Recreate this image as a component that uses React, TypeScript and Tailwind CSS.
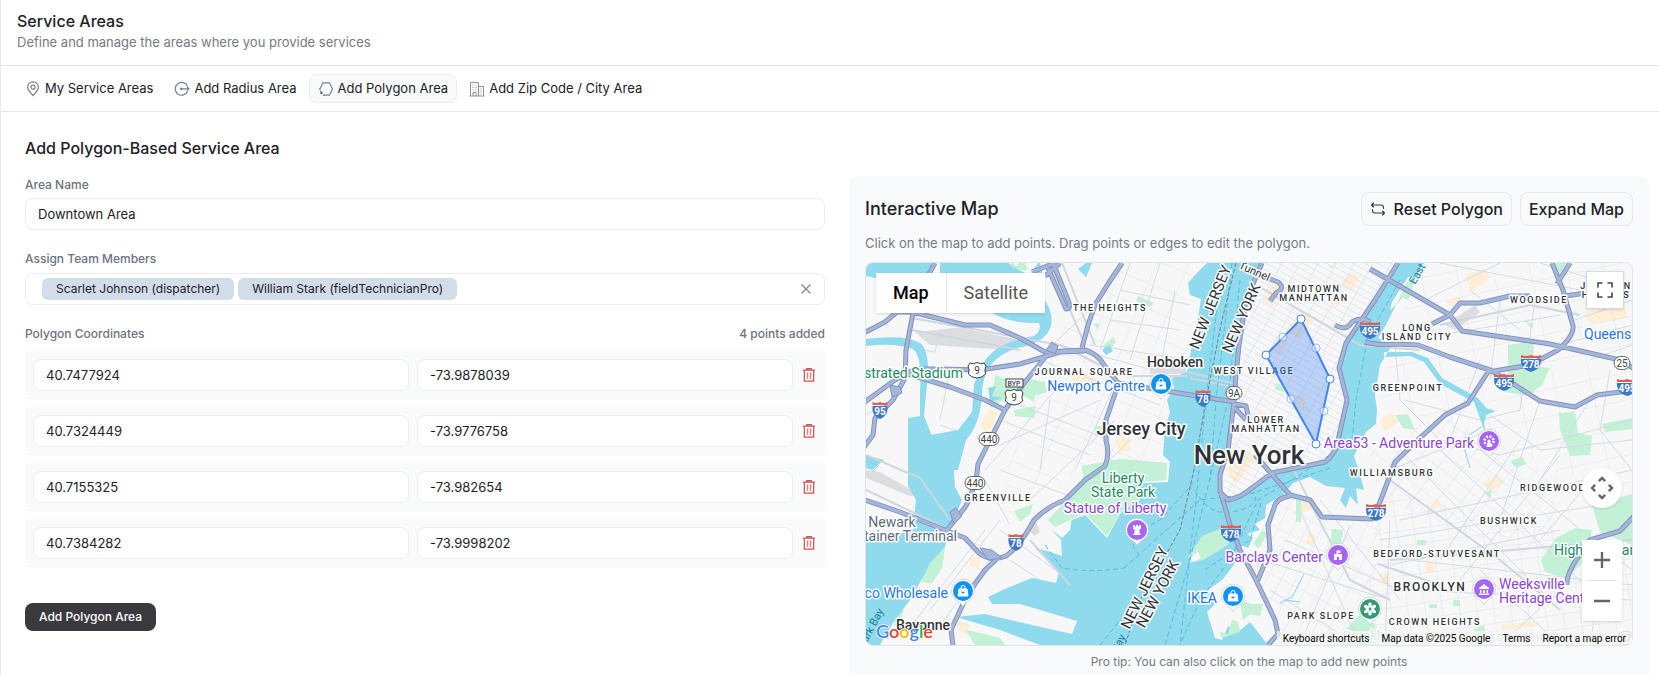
import { useState } from 'react'

type Point = { id: number; lat: string; lng: string }

const INITIAL_POINTS: Point[] = [
  { id: 1, lat: '40.7477924', lng: '-73.9878039' },
  { id: 2, lat: '40.7324449', lng: '-73.9776758' },
  { id: 3, lat: '40.7155325', lng: '-73.982654' },
  { id: 4, lat: '40.7384282', lng: '-73.9998202' },
]

const MEMBERS = ['Scarlet Johnson (dispatcher)', 'William Stark (fieldTechnicianPro)']

/* ---------- Icons ---------- */

function PinIcon() {
  return (
    <svg width="16" height="16" viewBox="0 0 16 16" fill="none" stroke="#7b818c" strokeWidth="1.200">
      <path d="M8 14.600C5.200 11.400 2.600 9 2.600 6.200a5.400 5.400 0 0 1 10.800 0c0 2.800-2.600 5.200-5.400 8.400Z" />
      <circle cx="8" cy="6.200" r="2" />
    </svg>
  )
}

function RadiusIcon() {
  return (
    <svg width="16" height="16" viewBox="0 0 16 16" fill="none" stroke="#7b818c" strokeWidth="1.200">
      <path d="M13.600 5.600a6.400 6.400 0 1 0 0 4.400" />
      <path d="M7 7.800h8M13 6l2 1.800-2 1.800" />
      <circle cx="7.200" cy="7.800" r="1.300" fill="#7b818c" stroke="none" />
    </svg>
  )
}

function PolygonIcon() {
  return (
    <svg width="16" height="16" viewBox="0 0 16 16" fill="none" stroke="#7b818c" strokeWidth="1.200">
      <path d="M1.600 8.400 5 1.800h6.400L14.600 8l-3.200 6.200H5.200" />
      <path d="M1.600 7.400 3 11" strokeDasharray="1.500 1" />
      <circle cx="3.400" cy="12" r="1.200" fill="#5c626d" stroke="none" />
      <path d="M5.200 14.200h1.600" />
    </svg>
  )
}

function CityIcon() {
  return (
    <svg width="16" height="16" viewBox="0 0 16 16" fill="none" stroke="#8b919b" strokeWidth="1">
      <path d="M1.500 15V1.500h8V15M9.500 5.500h5V15M.500 15h15" />
      <path d="M4 15v-3.500h3V15" />
      <path d="M3.500 4h1M6.500 4h1M3.500 6.500h1M6.500 6.500h1M3.500 9h1M6.500 9h1M11.500 8h1M11.500 10.500h1M11.500 13h1" />
    </svg>
  )
}

function TrashIcon() {
  return (
    <svg width="16" height="16" viewBox="0 0 16 16" fill="none" stroke="#cf4f49" strokeWidth="1.200">
      <path d="M2 3.100h12M5.800 2.900V1.600h4.400v1.300" />
      <path d="M3.300 3.400v10.800h9.400V3.400" />
      <path d="M6.500 5.500v6.500M9.500 5.500v6.500" stroke="#dd8480" strokeWidth="1.400" />
    </svg>
  )
}

function ResetIcon() {
  return (
    <svg width="16" height="16" viewBox="0 0 16 16" fill="none" stroke="#33363d" strokeWidth="1.100" strokeLinecap="round" strokeLinejoin="round">
      <path d="M3.500 2 1.500 4l2 2M1.500 4h9.500a2.500 2.500 0 0 1 2.500 2.500v1" />
      <path d="M12.500 10l2 2-2 2M14.500 12H5a2.500 2.500 0 0 1-2.500-2.500v-1" />
    </svg>
  )
}

/* ---------- Map drawing ---------- */

const WATER = [
  'M866 263H935L921 285 905 276 886 280 866 276Z',
  'M940 263H1009L1012 267 1030 275 1038 263H1040L1044 280V312H930L940 290Z',
  // Hackensack river bends
  'M990 312H1043V298Q1054 312 1051 326 1046 342 1022 347 1000 352 990 366 982 378 982 395 980 425 966 440L958 470H908V418L920 416V390Q922 360 915 351 905 342 866 346V339Q905 334 920 343 929 350 928 375L924 416 932 436 958 430 972 412 974 385Q980 362 995 350 1012 339 1034 336 1042 330 1039 323 1010 324 990 312Z',
  // Newark bay
  'M908 432 925 436 958 430 963 450 953 460 955 487 962 500 950 528 945 547 923 577 910 600 893 623 880 645H866V542L913 530 916 500 908 486Z',
  'M866 455 884 460 872 470 866 468Z',
  // Hudson, upper bay and East river
  'M1207 263 1196 274 1188 283 1190 295 1201 299 1197 325 1192 345 1187 372 1172 378 1174 388 1167 400 1170 412 1165 430 1163 455 1170 462 1168 482 1129 484 1140 500 1131 505 1120 514 1107 538 1085 515 1072 520 1060 523 1052 530 1061 540 1062 556 1050 552 1035 548 1059 572 1056 583 1032 578 1007 588 988 597 992 604 1020 604 1077 621 1072 634 1045 628 985 614 956 617 1000 630 1040 645H1268L1250 622 1238 632 1228 626 1222 640 1215 638 1207 612 1216 603 1208 590 1222 580 1233 566 1240 554 1236 543 1248 548 1253 538 1247 534 1260 530 1255 524 1265 518 1266 505 1274 500 1284 494 1293 483 1310 477 1326 486 1345 488 1340 500 1346 508 1350 496 1358 505 1356 488 1364 490 1360 474 1354 456 1366 432 1376 424 1377 410 1375 395 1380 365 1392 345 1378 338 1386 325 1396 305 1408 290 1424 263H1398L1375 300 1356 325 1347 345 1339 365 1347 395 1343 425 1334 452 1322 463 1272 473 1252 490 1236 499 1222 499 1218 480 1224 455 1230 425 1236 375 1238 345 1246 300 1262 263Z',
  // Newtown creek
  'M1384 352 1412 352 1428 358 1442 378 1478 398 1486 408 1496 411 1486 415 1484 424 1488 440 1482 424 1474 402 1440 384 1424 362 1410 356 1384 357Z',
  'M1102 350 1109 345 1113 351 1106 355ZM988 388 996 386 992 396 1003 398 990 402ZM1078 269l8-6h6l-6 14z',
]

const ISLANDS = [
  'M1413 276 1396 305 1390 310 1392 302 1408 277Z',
  'M1056 512 1072 517 1070 530 1062 538 1050 528Z',
]

const PARKS = [
  'M1005 270 1012 263H1025L1028 270Z',
  'M995 375 1003 378 1036 385 1034 402 1024 396 1010 404 1004 400 990 408 992 396Z',
  'M1024 378 1045 382 1047 392 1034 396Z',
  'M1014 410 1036 406 1034 418 1015 416Z',
  'M1082 466 1120 459 1167 463 1166 480 1129 483 1140 500 1120 513 1107 536 1085 513 1055 527 1048 520 1064 503 1084 484Z',
  'M1188 557 1202 536 1222 528 1233 533 1228 545 1203 560 1190 563Z',
  'M1014 511 1033 504 1030 514 1020 522Z',
  'M930 563 945 547 942 568 932 583 921 582Z',
  'M966 630 1000 638 1005 645H975Z',
  'M896 612 904 610 900 622 894 626Z',
  'M1093 323 1100 324 1098 330ZM1102 347 1113 337 1116 342 1110 350Z',
  'M1138 296 1154 303 1150 307 1136 301Z',
  'M1095 426h8v10h-8z',
  'M1414 283 1407 282 1400 296 1408 300Z',
  'M1508 345 1534 341 1533 366 1550 368 1542 385 1528 396 1505 392 1508 370Z',
  'M1559 413 1575 412 1578 433 1592 436 1590 455 1570 456 1560 430Z',
  'M1602 424 1632 418V429L1605 432Z',
  'M1395 415 1408 414 1415 430 1403 428Z',
  'M1510 461 1522 457 1527 464 1516 468Z',
  'M1523 319 1534 325 1531 328Z',
  'M1552 263H1566L1557 282Z',
  'M1556 538 1575 528 1592 530 1586 560 1566 578 1545 572 1541 560Z',
  'M1592 505 1632 494V545L1600 532Z',
  'M1571 450 1590 450V455L1571 453Z',
  'M1332 529 1343 530 1341 547 1331 543Z',
  'M1345 630 1362 612 1375 625 1376 645H1340Z',
  'M1240 600 1251 604 1263 604 1260 616 1250 614 1243 620Z',
  'M1213 612 1222 638 1240 632 1238 622 1232 620 1228 634 1220 632Z',
  'M1253 544l10-14 4 4-8 14z',
  'M1474 629 1484 625 1486 640 1475 637Z',
  'M1276 383l10 4-3 5-8-3z',
  'M1296 500h5v22h-5z',
  'M1485 493 1492 489 1490 499Z',
  'M1417 540h9v5h-9zM1453 600h7v6h-7zM1429 604h8v4h-8z',
]

const BLOCKS = [
  'M1285 330l18-20 12 8-16 22zM1262 300l12-16 10 4-12 20zM1340 285l10-12 10 4-8 14zM1226 470l14-20 18 6-22 28zM1330 300l10-8 4 8-8 8z',
  'M1290 400l12-6 6 14-10 6zM1250 420l10-10 8 8-10 10zM1270 350l8-14 10 6-8 14z',
  'M1465 275l18-6 8 8-20 16zM1446 302l14-6 2 6-12 4zM1583 312l42-6 2 12-36 6z',
  'M1483 483l14-8 8 8-14 8zM1380 420l12-8 6 10-14 10zM1430 503l8-4 4 8-8 2z',
  'M980 425l10-16 8 4-10 22zM1067 373l14-4 16 10-4 8-20-6zM1116 440l14-3v12l-12 4z',
  'M970 556l12 2-4 10-8-2zM956 620l14 4-2 12-10-6zM1296 495l18 3 4 10-16 4zM1308 533l8 2-2 10-8-2z',
  'M1500 625l40-4v5l-38 4zM1380 575l10-3v12l-8 2zM1425 560l8 1 1 12h-8z',
]

const HIGHWAYS = [
  'M935 263 920 290 912 318 906 350 905 378 893 400 875 418 873 435 862 450',
  'M862 334 885 322 897 312 912 312 965 325 990 325 1020 338 1045 352 1085 350Q1098 354 1104 365L1118 383 1160 390 1235 402',
  'M862 404 895 380 915 369 940 369 980 370 1020 364 1060 352 1085 351',
  'M905 373 950 387 985 400 1005 410',
  'M1047 355 1025 382 1005 410 995 430 978 464 976 482 966 506 947 530',
  'M1122 263 1108 284 1095 305 1088 325 1082 348',
  'M1045 276 1060 263M1048 268 1066 309Q1072 309 1068 300L1053 263M1032 272 1055 263',
  'M862 499 900 512 945 530 965 538 980 554Q992 562 1006 556 1020 546 1034 520 1048 506 1065 500L1085 480 1105 466Q1110 455 1106 440V420L1118 385',
  'M1000 556 985 570 975 584 964 602 951 630 953 645',
  'M1262 263 1246 300 1239 345 1236 375 1234 402 1228 450 1220 475 1220 492 1228 500Q1240 498 1252 488L1272 473 1325 462Q1334 455 1337 445L1347 400 1339 368 1346 343 1375 300 1398 263',
  'M1220 490 1230 525 1240 550 1255 578 1275 620 1278 634 1268 645',
  'M1255 455 1290 495 1310 500 1322 517 1372 519 1380 502 1395 462 1420 438 1445 415 1468 403 1488 372 1530 365 1558 350Q1574 336 1573 326L1563 290 1552 263',
  'M1290 496Q1276 498 1274 508L1268 525 1270 550 1258 580',
  'M1370 269 1450 315 1462 331 1550 344 1620 360 1636 370',
  'M1365 342Q1380 346 1395 344L1418 345 1450 357 1490 370 1515 385 1540 401 1575 407 1597 395 1636 390',
  'M1432 324 1450 315 1460 303H1480L1510 296H1530M1565 296 1600 291',
  'M1557 284 1570 263',
  'M1567 585Q1566 575 1578 557L1590 540 1620 531 1636 514',
  'M1335 325Q1346 332 1352 322 1362 316 1370 322',
  'M1262 276 1278 282Q1286 288 1276 293L1270 301',
  'M1235 404 1246 406 1248 416M1235 408 1246 420',
]

const STREETS = [
  'M866 415 900 395M896 345 935 352 940 330 990 325M940 420 948 380M940 425 960 432',
  'M1000 420 1090 455M1020 405 1110 440M1000 445 1100 400M985 470 1060 385M1030 500 1115 420M1060 510 1130 440M1000 470 1080 500M1040 360 1160 405M1050 400 1040 470M1115 385 1075 470',
  'M1045 352 1100 300 1120 263M1060 345 1160 372M1090 345 1190 360M1130 263 1100 350M1160 263 1130 360M1175 290 1160 370M1110 320 1180 330M1120 290 1190 305',
  'M930 610 1000 520M912 625 985 530M940 625 990 560M985 480 1010 525M1000 530 1055 570M1010 560 1040 580',
  'M1425 300 1500 263M1440 335 1560 315M1470 290 1520 330M1500 300 1490 380M1535 300 1520 410M1560 345 1632 325M1575 320 1632 300M1590 360 1632 345M1480 360 1450 440M1440 263 1580 290M1540 263 1590 278',
  'M1395 345 1400 400 1440 440 1500 455 1632 420M1405 400 1480 420 1520 410M1490 415 1540 450 1632 440M1540 400 1500 520M1590 400 1540 480M1610 370 1600 430 1632 470',
  'M1390 470 1490 430M1400 520 1632 470M1380 540 1632 500M1390 565 1560 530M1400 450 1560 610M1440 450 1590 590M1480 450 1632 570M1520 440 1440 560M1560 455 1460 580M1600 470 1540 540',
  'M1300 510 1360 645M1320 500 1400 600M1285 540 1400 590M1262 560 1390 600M1270 590 1350 640M1350 525 1300 645M1390 520 1385 645M1410 560 1632 585M1400 590 1632 600M1480 570 1560 645M1560 590 1500 645M1600 585 1590 645',
]

const MAJOR_STREETS = [
  'M1258 286 1360 345 1420 350M1290 463 1350 580 1390 600M1378 564 1440 585M1390 480 1500 560 1560 610M1390 560 1632 540',
  'M1188 372 1236 384M1190 378 1236 388M1128 376 1188 376',
  'M912 318 1060 345 1100 365M912 330 1020 350',
  'M1050 263 1085 345M1062 263 1095 345M1440 325 1530 305 1580 315',
  'M866 490 950 530M866 455 920 478 950 520M1030 540 1070 585',
]

// Dashed ferry routes and the state line in the harbour
const FERRIES = [
  'M1222 263 1206 400 1196 500 1180 645M1232 263 1216 400 1210 480M1240 280 1228 400 1212 470 1190 560 1165 645',
  'M1045 545 1062 568Q1090 573 1124 568M1100 645 1120 620M1124 568 1200 500 1250 494 1330 468',
  'M1370 325 1356 400 1352 440 1300 475 1258 500 1230 560 1200 600 1180 645M1400 280 1364 345',
  'M1195 490Q1210 520 1240 510 1260 505 1254 492M1205 570 1250 540 1262 500M1140 555Q1120 540 1160 520L1196 480',
]

type LabelProps = { x: number; y: number; size?: number; anchor?: 'start' | 'middle' | 'end'; fill?: string; weight?: number; rotate?: number; children: string }

function Label({ x, y, size = 14, anchor = 'middle', fill = '#2f3338', weight = 400, rotate, children }: LabelProps) {
  return (
    <text
      x={x}
      y={y}
      fontSize={size}
      textAnchor={anchor}
      fill={fill}
      fontWeight={weight}
      stroke="#ffffff"
      strokeWidth="3"
      strokeLinejoin="round"
      paintOrder="stroke"
      transform={rotate ? `rotate(${rotate} ${x} ${y})` : undefined}
    >
      {children}
    </text>
  )
}

const DISTRICTS: [number, number, string][] = [
  [1110, 311, 'THE HEIGHTS'],
  [1314, 292, 'MIDTOWN'],
  [1314, 301, 'MANHATTAN'],
  [1254, 374, 'WEST VILLAGE'],
  [1266, 423, 'LOWER'],
  [1266, 432, 'MANHATTAN'],
  [1417, 331, 'LONG'],
  [1417, 340, 'ISLAND CITY'],
  [1539, 303, 'WOODSIDE'],
  [1606, 289, 'JACKSON'],
  [1606, 298, 'HEIGHTS'],
  [1408, 391, 'GREENPOINT'],
  [1084, 375, 'JOURNAL SQUARE'],
  [998, 501, 'GREENVILLE'],
  [1392, 476, 'WILLIAMSBURG'],
  [1553, 491, 'RIDGEWOOD'],
  [1509, 524, 'BUSHWICK'],
  [1437, 557, 'BEDFORD-STUYVESANT'],
  [1321, 619, 'PARK SLOPE'],
  [1435, 625, 'CROWN HEIGHTS'],
]

const INTERSTATES: [number, number, string][] = [
  [880, 410, '95'],
  [1203, 398, '78'],
  [1370, 330, '495'],
  [1531, 363, '278'],
  [1504, 382, '495'],
  [1627, 387, '495'],
  [1016, 542, '78'],
  [1231, 533, '478'],
  [1376, 512, '278'],
]

function Interstate({ x, y, text }: { x: number; y: number; text: string }) {
  const w = text.length === 3 ? 10 : 7.5
  return (
    <g transform={`translate(${x} ${y})`}>
      <path d={`M${-w} -4H${w}Q${w + 1} 6 0 9Q${-w - 1} 6 ${-w} -4Z`} fill="#3b78c9" />
      <path d={`M${-w} -8Q${-w / 2} -6 0 -8Q${w / 2} -6 ${w} -8V-5H${-w}Z`} fill="#e06055" />
      <text y="5" fontSize="10" fontWeight="700" fill="#ffffff" textAnchor="middle">
        {text}
      </text>
    </g>
  )
}

function RouteOval({ x, y, text, opacity = 1 }: { x: number; y: number; text: string; opacity?: number }) {
  const w = text.length === 3 ? 20 : 16
  return (
    <g transform={`translate(${x} ${y})`} opacity={opacity}>
      <rect x={-w / 2} y="-6.500" width={w} height="13" rx="6.500" fill="#ffffff" stroke="#5f6368" />
      <text y="3.500" fontSize="10" fill="#3c4043" textAnchor="middle">
        {text}
      </text>
    </g>
  )
}

function UsRoute({ x, y }: { x: number; y: number }) {
  return (
    <g transform={`translate(${x} ${y})`}>
      <path d="M-7-7Q-3.500-5.500 0-7.500 3.500-5.500 7-7L9-4Q7 0 8.500 4 6 7.500 0 8-6 7.500-8.500 4-7 0-9-4Z" fill="#ffffff" stroke="#3c4043" />
      <text y="4" fontSize="10" fill="#3c4043" textAnchor="middle">
        9
      </text>
    </g>
  )
}

const GLYPHS = {
  bag: 'M-4-2h8l1 7h-10zM-2-2v-1.500a2 2 0 0 1 4 0V-2',
  rook: 'M-4 5h8l-1.500-2v-4h1.500v-4h-1.800v1.500h-1.200v-1.500h-2v1.500h-1.200V-5H-4v4h1.500v4z',
  hall: 'M-4 5v-6h2.500v-3.500h4v2.500h-2.500V-1H4v6H1V2h-2v3z',
  museum: 'M-5-1 0-5 5-1v1H-5zM-4 1h1.500v3H-4zM-.8 1h1.600v3H-.8zM2.500 1H4v3H2.500zM-5 4.500H5V6H-5z',
}

type PinProps = { x: number; y: number; fill: string; kind: 'bag' | 'rook' | 'hall' | 'museum' | 'flower' | 'ride' }

function Pin({ x, y, fill, kind }: PinProps) {
  return (
    <g transform={`translate(${x} ${y})`}>
      <path d="M0 15.500C-2 11.500-4.500 11.500-8 8A11.500 11.500 0 1 1 8 8C4.500 11.500 2 11.500 0 15.500Z" fill="#ffffff" stroke="#b9bfc7" strokeWidth=".6" />
      <circle r="10" fill={fill} />
      {(kind === 'bag' || kind === 'rook' || kind === 'hall' || kind === 'museum') && (
        <path d={GLYPHS[kind]} fill="#ffffff" stroke={kind === 'bag' ? '#ffffff' : 'none'} strokeWidth="1" />
      )}
      {kind === 'bag' && <path d="M-1.500-2.500V-3.500a1.500 1.500 0 0 1 3 0v1zM-1.800.8a1.800 1.800 0 0 0 3.600 0z" fill={fill} />}
      {kind === 'flower' && (
        <g fill="#ffffff">
          {[0, 60, 120, 180, 240, 300].map((a) => (
            <ellipse key={a} cy="-4" rx="1.800" ry="2.800" transform={`rotate(${a})`} />
          ))}
        </g>
      )}
      {kind === 'ride' && (
        <g fill="#ffffff">
          <circle r="4.500" fill="none" stroke="#ffffff" strokeWidth="2.600" strokeDasharray="2 1.530" />
          <circle r="1.600" />
          <path d="M-1 0h2l1.500 6h-5z" />
        </g>
      )}
    </g>
  )
}

const VERTICES = [
  [1301, 319],
  [1330, 379],
  [1316, 444],
  [1266, 355],
]
const MIDPOINTS = [
  [1316, 348],
  [1324, 411],
  [1291, 399],
  [1283, 337],
]

const GREEN = '#1b8a63'
const BLUE = '#1f76e8'
const PURPLE = '#8a44d6'

function MapDrawing() {
  return (
    <svg
      viewBox="866 263 766 382"
      preserveAspectRatio="xMidYMid slice"
      className="block h-full w-full font-[Roboto,sans-serif]"
      role="img"
      aria-label="Map of New York with the service polygon"
    >
      <defs>
        <pattern id="manhattan" width="16" height="6" patternUnits="userSpaceOnUse" patternTransform="rotate(29)">
          <path d="M0 0H16M0 0V6" stroke="#d2dbe6" strokeWidth="1" />
        </pattern>
        <pattern id="brooklyn" width="17" height="15" patternUnits="userSpaceOnUse" patternTransform="rotate(-8)">
          <path d="M0 0H17M0 0V15" stroke="#dce3ec" strokeWidth="1" />
        </pattern>
        <pattern id="slope" width="13" height="22" patternUnits="userSpaceOnUse" patternTransform="rotate(27)">
          <path d="M0 0H13M0 0V22" stroke="#dce3ec" strokeWidth="1" />
        </pattern>
        <pattern id="bushwick" width="20" height="14" patternUnits="userSpaceOnUse" patternTransform="rotate(38)">
          <path d="M0 0H20M0 0V14" stroke="#dce3ec" strokeWidth="1" />
        </pattern>
        <pattern id="queens" width="36" height="27" patternUnits="userSpaceOnUse" patternTransform="rotate(-12)">
          <path d="M0 0H36M0 0V27" stroke="#e0e5ec" strokeWidth="1" />
        </pattern>
        <pattern id="jersey" width="30" height="24" patternUnits="userSpaceOnUse" patternTransform="rotate(22)">
          <path d="M0 0H30M0 0V24" stroke="#e0e5ec" strokeWidth="1" />
        </pattern>
      </defs>

      <rect x="866" y="263" width="766" height="382" fill="#f7f7f7" />
      <path d={BLOCKS.join('')} fill="#fdeed6" />
      <path d="M1262 263H1398L1346 343 1347 400 1330 460 1222 500 1239 345Z" fill="url(#manhattan)" />
      <path d="M1380 490 1560 530 1632 560V645H1360L1372 560Z" fill="url(#brooklyn)" />
      <path d="M1262 510 1290 497 1380 525 1375 645H1285L1255 570Z" fill="url(#slope)" />
      <path d="M1365 440 1450 415 1560 480 1545 560 1380 500Z" fill="url(#bushwick)" />
      <path d="M1425 263H1632V500L1380 400 1392 340Z" fill="url(#queens)" />
      <path d="M1060 330 1120 263H1205L1165 460 1080 470 1000 520 1020 400Z" fill="url(#jersey)" />
      <path d="M915 332 960 328 1020 340 1010 350 930 345ZM1445 325 1475 305 1480 312 1455 330ZM1028 528 1036 522 1040 532 1034 536ZM866 470 880 472 920 495 910 496 866 478ZM1150 366h36v8h-36z" fill="#dcdde0" />

      <path d={PARKS.join('')} fill="#c3f1d5" />
      <path d={STREETS.join('')} fill="none" stroke="#d3dbe6" strokeWidth="1" />
      <path d={WATER.join('')} fill="#90daee" />
      <path d={ISLANDS.join('')} fill="#f7f7f7" />
      {/* Parks that lie in the water */}
      <path d={[PARKS[4], PARKS[5], PARKS[7], PARKS[8], PARKS[13], PARKS[26], PARKS[27], PARKS[28]].join('')} fill="#c3f1d5" />
      <path d="M1190 558l8-6 3 6-8 4z" fill="#f7f7f7" />

      <path d={MAJOR_STREETS.join('')} fill="none" stroke="#cfd6df" strokeWidth="2" />
      <path d={FERRIES.join('')} fill="none" stroke="#4fbfdb" strokeWidth="1" strokeDasharray="5 3" />
      <path d="M1236 263 1222 320 1206 400 1194 470 1180 530 1140 600 1125 645" fill="none" stroke="#6f7f92" strokeWidth="1" strokeDasharray="4 2" />
      <path d="M1280 603 1292 597 1304 574M1285 600 1300 602M1484 425 1462 440 1470 468M870 462 878 466 872 472" fill="none" stroke="#7bd6ec" strokeWidth="1" />

      <path d={HIGHWAYS.join('')} fill="none" stroke="#8094c0" strokeWidth="5" strokeLinejoin="round" />
      <path d={HIGHWAYS.join('')} fill="none" stroke="#a6b6d8" strokeWidth="3" strokeLinejoin="round" />
      <path d="M980 548l12 2 10 8-14 2zM950 512l6-4 6 8-8 8zM1046 350l6-8 6 4-3 8zM890 385l10 2 2 6-10 4z" fill="#a6b6d8" stroke="#8094c0" />

      {INTERSTATES.map(([x, y, text]) => (
        <Interstate key={`${x}-${y}`} x={x} y={y} text={text} />
      ))}
      <RouteOval x={989} y={439} text="440" />
      <RouteOval x={975} y={483} text="440" />
      <RouteOval x={1234} y={393} text="9A" />
      <RouteOval x={1622} y={363} text="25" />
      <RouteOval x={1626} y={638} text="27" opacity={0.6} />
      <UsRoute x={977} y={370} />
      <UsRoute x={1014} y={397} />
      <rect x="1006" y="379" width="17" height="8" fill="#ffffff" stroke="#3c4043" />
      <text x="1014" y="386" fontSize="7" fontWeight="500" textAnchor="middle" fill="#3c4043">
        BYP
      </text>

      <g className="tracking-widest">
        {DISTRICTS.map(([x, y, text]) => (
          <Label key={`${x}-${y}`} x={x} y={y} size={9} weight={500}>
            {text}
          </Label>
        ))}
        <Label x={1430} y={591} size={12} weight={500}>BROOKLYN</Label>
        <Label x={1521} y={641} size={9} fill="#b4b7bb">BROWNSVILLE</Label>
      </g>

      <Label x={1175} y={367} weight={500}>Hoboken</Label>
      <Label x={1141} y={435} size={18} weight={500}>Jersey City</Label>
      <Label x={1249} y={464} size={26} weight={500}>New York</Label>
      <Label x={923} y={630} weight={500}>Bayonne</Label>

      <Label x={1145} y={391} anchor="end" fill={BLUE}>Newport Centre</Label>
      <Label x={948} y={598} anchor="end" fill={BLUE}>Costco Wholesale</Label>
      <Label x={1217} y={603} anchor="end" fill={BLUE}>IKEA</Label>
      <Label x={1584} y={339} anchor="start" fill={BLUE}>Queens</Label>
      <Label x={963} y={378} anchor="end" fill={GREEN}>Sports Illustrated Stadium</Label>
      <Label x={1123} y={483} fill={GREEN}>Liberty</Label>
      <Label x={1123} y={497} fill={GREEN}>State Park</Label>
      <Label x={1554} y={555} anchor="start" fill={GREEN}>Highland Park</Label>
      <Label x={1343} y={640} anchor="start" size={13} fill="#9fcfbd">Brooklyn</Label>
      <Label x={1115} y={513} fill={PURPLE}>Statue of Liberty</Label>
      <Label x={1474} y={448} anchor="end" fill={PURPLE}>Area53 - Adventure Park</Label>
      <Label x={1323} y={562} anchor="end" fill={PURPLE}>Barclays Center</Label>
      <Label x={1499} y={589} anchor="start" fill={PURPLE}>Weeksville</Label>
      <Label x={1499} y={603} anchor="start" fill={PURPLE}>Heritage Center</Label>
      <Label x={892} y={527} fill="#5b6b80">Newark</Label>
      <Label x={957} y={541} anchor="end" fill="#5b6b80">Container Terminal</Label>

      <Label x={1215} y={309} size={15} rotate={-68}>NEW JERSEY</Label>
      <Label x={1246} y={320} size={15} rotate={-66}>NEW YORK</Label>
      <Label x={1149} y={590} size={15} rotate={-64}>NEW JERSEY</Label>
      <Label x={1162} y={596} size={15} rotate={-62}>NEW YORK</Label>
      <Label x={1238} y={268} size={11} anchor="start" rotate={24}>Tunnel</Label>
      <text x="1415" y="285" fontSize="11" fill="#17809b" transform="rotate(-60 1415 285)">East River</text>
      <text x="884" y="611" fontSize="11" textAnchor="end" fill="#17809b" transform="rotate(-62 884 611)">Newark Bay</text>
      <text x="1126" y="637" fontSize="11" textAnchor="end" fill="#17809b" transform="rotate(-62 1126 637)">Upper Bay</text>

      <Pin x={1161} y={384} fill="#0b93f6" kind="bag" />
      <Pin x={963} y={591} fill="#0b93f6" kind="bag" />
      <Pin x={1233} y={596} fill="#0b93f6" kind="bag" />
      <Pin x={1137} y={530} fill="#a565f5" kind="rook" />
      <Pin x={1338} y={555} fill="#a565f5" kind="hall" />
      <Pin x={1489} y={441} fill="#a565f5" kind="ride" />
      <Pin x={1484} y={589} fill="#a565f5" kind="museum" />
      <Pin x={1370} y={609} fill="#349a73" kind="flower" />
      <Pin x={1331} y={252} fill="#ffffff" kind="ride" />
      <Pin x={1016} y={252} fill="#ffffff" kind="ride" />

      {/* Service polygon with its drag handles */}
      <polygon points={VERTICES.map((v) => v.join(',')).join(' ')} fill="#4285f4" fillOpacity=".33" stroke="#4285f4" strokeWidth="2" />
      {MIDPOINTS.map(([x, y]) => (
        <circle key={`${x}-${y}`} cx={x} cy={y} r="4" fill="#ffffff" fillOpacity=".5" stroke="#4285f4" strokeOpacity=".5" />
      ))}
      {VERTICES.map(([x, y]) => (
        <circle key={`${x}-${y}`} cx={x} cy={y} r="4" fill="#ffffff" stroke="#4285f4" />
      ))}
    </svg>
  )
}

function GoogleLogo() {
  return (
    <svg width="64" height="26" viewBox="0 0 64 26" role="img" aria-label="Google" className="font-[Lato,sans-serif]">
      <text x="0" y="19" fontSize="18" fontWeight="600" stroke="#ffffff" strokeWidth="1.500" paintOrder="stroke">
        <tspan fill="#4285f4">G</tspan>
        <tspan fill="#e94235">o</tspan>
        <tspan fill="#fabb05">o</tspan>
        <tspan fill="#4285f4">g</tspan>
        <tspan fill="#34a853">l</tspan>
        <tspan fill="#e94235">e</tspan>
      </text>
    </svg>
  )
}

function InteractiveMap() {
  return (
    <div className="relative h-96 overflow-hidden rounded-lg border border-[#dfe4ea]">
      <MapDrawing />

      <div className="absolute top-2.5 left-2.5 flex h-10 bg-white font-[Roboto,sans-serif] text-lg shadow">
        <button type="button" className="border-r border-gray-200 px-[17px] font-medium text-black">Map</button>
        <button type="button" className="px-[17px] text-[#565656]">Satellite</button>
      </div>

      <button type="button" aria-label="Toggle fullscreen view" className="absolute top-2 right-2 flex h-[38px] w-[38px] items-center justify-center border border-[#d5dbe5] bg-white shadow">
        <svg width="16" height="16" viewBox="0 0 16 16" fill="none" stroke="#444444" strokeWidth="1.600">
          <path d="M1 5.500V1h4.500M10.500 1H15v4.500M15 10.500V15h-4.500M5.500 15H1v-4.500" />
        </svg>
      </button>

      <button type="button" aria-label="Map camera controls" className="absolute right-2.5 bottom-[137px] flex h-10 w-10 items-center justify-center rounded-full bg-white shadow">
        <svg width="24" height="24" viewBox="0 0 24 24" fill="none" stroke="#666666" strokeWidth="2.400">
          <path d="M8.800 5.200 12 2l3.200 3.200M8.800 18.800 12 22l3.200-3.200M5.200 8.800 2 12l3.200 3.200M18.800 8.800 22 12l-3.200 3.200" />
        </svg>
      </button>

      <div className="absolute right-2.5 bottom-6 flex w-10 flex-col items-center bg-white shadow">
        <button type="button" aria-label="Zoom in" className="flex h-10 w-10 items-center justify-center">
          <svg width="16" height="16" viewBox="0 0 16 16" stroke="#666666" strokeWidth="2.400">
            <path d="M8 0v16M0 8h16" />
          </svg>
        </button>
        <div className="h-px w-[30px] bg-[#e6e6e6]" />
        <button type="button" aria-label="Zoom out" className="flex h-10 w-10 items-center justify-center">
          <svg width="16" height="16" viewBox="0 0 16 16" stroke="#666666" strokeWidth="2.400">
            <path d="M0 8h16" />
          </svg>
        </button>
      </div>

      <div className="absolute bottom-0 left-2.5">
        <GoogleLogo />
      </div>
      <div className="absolute right-0 bottom-0 flex h-3.5 items-center gap-3 bg-[#f5f5f5]/70 px-1.5 font-[Roboto,sans-serif] text-[10px] text-black">
        <button type="button">Keyboard shortcuts</button>
        <span>Map data ©2025 Google</span>
        <a href="#terms">Terms</a>
        <a href="#report">Report a map error</a>
      </div>
    </div>
  )
}

/* ---------- Page ---------- */

const TABS = [
  { label: 'My Service Areas', icon: <PinIcon /> },
  { label: 'Add Radius Area', icon: <RadiusIcon /> },
  { label: 'Add Polygon Area', icon: <PolygonIcon /> },
  { label: 'Add Zip Code / City Area', icon: <CityIcon /> },
]

export default function App() {
  const [activeTab, setActiveTab] = useState('Add Polygon Area')
  const [areaName, setAreaName] = useState('Downtown Area')
  const [members, setMembers] = useState(MEMBERS)
  const [points, setPoints] = useState(INITIAL_POINTS)

  const updatePoint = (id: number, key: 'lat' | 'lng', value: string) => {
    setPoints(points.map((p) => (p.id === id ? { ...p, [key]: value } : p)))
  }

  return (
    <div className="h-screen overflow-y-auto border-l border-[#e8eaee] bg-white font-[Inter,sans-serif] text-[#202228] [scrollbar-width:none]">
      <header className="border-b border-[#e3e5e9] px-4 pt-[9px] pb-[13px]">
        <h1 className="text-base leading-6 font-medium">Service Areas</h1>
        <p className="text-[13px] leading-[19px] text-[#757b85]">Define and manage the areas where you provide services</p>
      </header>

      <nav className="flex gap-[3px] border-b border-[#e3e5e9] px-[15px] py-2">
        {TABS.map(({ label, icon }) => (
          <button
            key={label}
            type="button"
            onClick={() => setActiveTab(label)}
            className={`flex h-[29px] items-center gap-1 rounded-lg border px-2 text-[13px] ${
              activeTab === label ? 'border-[#e8ebf0] bg-[#f8fafc]' : 'border-transparent'
            }`}
          >
            {icon}
            {label}
          </button>
        ))}
      </nav>

      <main className="pt-6 pr-2.5 pl-6">
        <h2 className="text-base leading-6 font-medium">Add Polygon-Based Service Area</h2>

        <div className="mt-4 grid grid-cols-2 gap-6">
          <form onSubmit={(e) => e.preventDefault()}>
            <label htmlFor="area-name" className="mb-1 block text-xs leading-[18px] font-medium text-[#6b7280]">Area Name</label>
            <input
              id="area-name"
              type="text"
              value={areaName}
              onChange={(e) => setAreaName(e.target.value)}
              className="block h-8 w-full rounded-lg border border-[#eaecef] bg-white px-3 text-[13px]"
            />

            <label htmlFor="team-members" className="mt-5 mb-[5px] block text-xs leading-[18px] font-medium text-[#6b7280]">Assign Team Members</label>
            <div className="flex h-8 items-center gap-1 rounded-lg border border-[#eaecef] pr-3 pl-4">
              {members.map((member) => (
                <span key={member} className="flex h-[22px] items-center rounded-md bg-[#d3dde9] px-3.5 text-xs">{member}</span>
              ))}
              <input id="team-members" type="text" role="combobox" aria-expanded="false" className="min-w-0 flex-1 bg-transparent text-xs outline-none" />
              <button type="button" aria-label="Clear team members" onClick={() => setMembers([])}>
                <svg width="12" height="12" viewBox="0 0 12 12" stroke="#7b818c" strokeWidth="1.100">
                  <path d="m1.500 1.500 9 9M10.500 1.500l-9 9" />
                </svg>
              </button>
            </div>

            <div className="mt-5 mb-2 flex items-center justify-between text-xs leading-[18px] font-medium text-[#6b7280]">
              <span>Polygon Coordinates</span>
              <span>{points.length} points added</span>
            </div>
            <div className="flex flex-col gap-2">
              {points.map((p) => (
                <div key={p.id} className="flex items-center gap-2 bg-[#f8fafc] p-2">
                  <input
                    type="text"
                    aria-label={`Point ${p.id} latitude`}
                    value={p.lat}
                    onChange={(e) => updatePoint(p.id, 'lat', e.target.value)}
                    className="h-8 min-w-0 flex-1 rounded-lg border border-[#eaecef] bg-white px-3 text-[13px]"
                  />
                  <input
                    type="text"
                    aria-label={`Point ${p.id} longitude`}
                    value={p.lng}
                    onChange={(e) => updatePoint(p.id, 'lng', e.target.value)}
                    className="h-8 min-w-0 flex-1 rounded-lg border border-[#eaecef] bg-white px-3 text-[13px]"
                  />
                  <button type="button" aria-label={`Delete point ${p.id}`} onClick={() => setPoints(points.filter((q) => q.id !== p.id))}>
                    <TrashIcon />
                  </button>
                </div>
              ))}
            </div>

            <button type="submit" className="mt-9 h-7 rounded-lg bg-[#3a3a3e] px-3.5 text-xs font-medium text-white">
              Add Polygon Area
            </button>
          </form>

          <section className="rounded-lg bg-[#f8fafc] p-4">
            <div className="flex items-center justify-between">
              <h3 className="text-lg font-medium">Interactive Map</h3>
              <div className="flex gap-2">
                <button type="button" onClick={() => setPoints([])} className="flex h-[34px] items-center gap-2 rounded-lg border border-[#e5e7eb] px-2 text-base font-medium">
                  <ResetIcon />
                  Reset Polygon
                </button>
                <button type="button" className="h-[34px] rounded-lg border border-[#e5e7eb] px-2 text-base font-medium">Expand Map</button>
              </div>
            </div>
            <p className="mt-[7px] mb-[9px] text-[13px] leading-5 text-[#757b85]">Click on the map to add points. Drag points or edges to edit the polygon.</p>
            <InteractiveMap />
            <p className="mt-2 text-center text-xs text-[#757b85]">Pro tip: You can also click on the map to add new points</p>
          </section>
        </div>
      </main>
    </div>
  )
}
